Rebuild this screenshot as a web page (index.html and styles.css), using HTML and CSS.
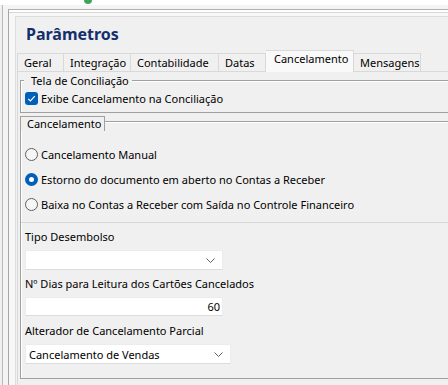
FILE: index.html
```html
<!DOCTYPE html>
<html lang="pt-BR">
  <head>
    <meta charset="UTF-8" />
    <meta name="viewport" content="width=device-width, initial-scale=1.0" />
    <title>Parâmetros</title>
    <link rel="stylesheet" href="styles.css">
  </head>
  <body>
    <div class="topbar"><span class="logo-dot"></span></div>
    <div class="frame">
      <div class="win">
        <div class="panel">
          <div class="header">
            <h1>Parâmetros</h1>
          </div>
          <ul class="tabs">
            <li>Geral</li>
            <li>Integração</li>
            <li>Contabilidade</li>
            <li>Datas</li>
            <li class="active">Cancelamento</li>
            <li>Mensagens</li>
          </ul>
          <div class="tabpage">
            <div class="group g-tela">
              <span class="legend">Tela de Conciliação</span>
              <label class="check">
                <span class="box">
                  <svg width="13" height="13" viewBox="0 0 13 13"><path d="M3.2 6.8 L5.4 9 L9.8 4.2" fill="none" stroke="#fff" stroke-width="1.2" /></svg>
                </span>
                Exibe Cancelamento na Conciliação
              </label>
            </div>

            <div class="group g-cancel">
              <span class="legend boxed">Cancelamento</span>
              <div class="radios">
                <label class="radio"><span class="dot"></span>Cancelamento Manual</label>
                <label class="radio"><span class="dot on"></span>Estorno do documento em aberto no Contas a Receber</label>
                <label class="radio"><span class="dot"></span>Baixa no Contas a Receber com Saída no Controle Financeiro</label>
              </div>
              <div class="fields">
                <div class="field">
                  <span class="lbl">Tipo Desembolso</span>
                  <div class="select"><span></span><svg class="chev" width="9" height="5" viewBox="0 0 9 5"><path d="M0.5 0.5 L4.5 4.5 L8.5 0.5" fill="none" stroke="#606060" stroke-width="1" /></svg></div>
                </div>
                <div class="field">
                  <span class="lbl">Nº Dias para Leitura dos Cartões Cancelados</span>
                  <div class="input">60</div>
                </div>
                <div class="field f-last">
                  <span class="lbl">Alterador de Cancelamento Parcial</span>
                  <div class="select wide"><span>Cancelamento de Vendas</span><svg class="chev" width="9" height="5" viewBox="0 0 9 5"><path d="M0.5 0.5 L4.5 4.5 L8.5 0.5" fill="none" stroke="#606060" stroke-width="1" /></svg></div>
                </div>
              </div>
            </div>
          </div>
        </div>
      </div>
    </div>
  </body>
</html>
```

FILE: styles.css
```css
* {
  margin: 0;
  padding: 0;
  box-sizing: border-box;
}
html,
body {
  height: 100%;
  overflow: hidden;
}
body {
  background-color: #f0f0f0;
  font-family: "Noto Sans", "Open Sans", sans-serif;
  font-size: 11px;
  line-height: 15px;
  color: #000;
}
li {
  list-style: none;
}

/* topo da janela */
.topbar {
  height: 5px;
  background-color: #fff;
}
.logo-dot {
  display: block;
  width: 8px;
  height: 4px;
  margin-left: 84px;
  border-radius: 0 0 4px 4px;
  background-color: #3ba55c;
}
.frame {
  height: 380px;
  margin-left: 2px;
  padding: 4px 0 0 5px;
  border-left: 1px solid #b8b8b8;
  background-color: #f4f4f4;
}
.win {
  height: 100%;
  padding: 6px 0 0 6px;
  border-left: 1px solid #a6a6a6;
  border-top: 1px solid #b0b0b0;
  box-shadow: inset 0 2px 0 #fff, inset 0 3px 0 #d6d6d6;
  background-color: #f7f7f7;
}
.panel {
  height: 100%;
  border-left: 1px solid #dcdcdc;
  border-top: 1px solid #dcdcdc;
  background-color: #f0f0f0;
}

/* titulo */
.header {
  height: 33px;
  padding: 7px 0 0 10px;
}
.header h1 {
  font-size: 16px;
  line-height: 20px;
  font-weight: bold;
  color: #142f6c;
}

/* abas - larguras fixas como no form original */
.tabs {
  display: grid;
  grid-template-columns: 47px 67px 88px 47px 88px 67px;
  align-items: end;
  margin-left: 1px;
  height: 21px;
  position: relative;
  z-index: 1;
}
.tabs li {
  height: 18px;
  padding: 1px 0 0 6px;
  border: 1px solid #d9d9d9;
  border-bottom: none;
  border-left: none;
  background-color: #f0f0f0;
  white-space: nowrap;
}
.tabs li:first-child {
  border-left: 1px solid #d9d9d9;
}
.tabs li.active {
  height: 22px;
  margin-bottom: -1px;
  padding: 0 0 0 8px;
  background-color: #f9f9f9;
}
.tabpage {
  height: 320px;
  margin-left: 1px;
  padding: 8px 0 0 2px;
  border-top: 1px solid #d9d9d9;
  border-left: 1px solid #d9d9d9;
}

/* caixas de grupo */
.group {
  position: relative;
  border: 1px solid #a0a0a0;
  border-right: none;
  box-shadow: inset 1px 1px 0 #fff;
}
.legend {
  position: absolute;
  top: -8px;
  left: 3px;
  padding: 0 3px 0 7px;
  background-color: #f0f0f0;
}
.legend.boxed {
  top: -6px;
  left: -1px;
  height: 15px;
  padding: 0 3px 0 6px;
  border: 1px solid #a0a0a0;
  border-bottom: none;
  line-height: 14px;
}
.g-tela {
  height: 33px;
  padding: 10px 0 0 4px;
}
.g-cancel {
  margin-top: 8px;
  height: 258px;
}

.check,
.radio {
  display: flex;
  align-items: center;
  column-gap: 3px;
}
.check .box {
  display: block;
  width: 13px;
  height: 13px;
  border-radius: 3px;
  background-color: #005fb8;
}
.check svg {
  display: block;
}

.radios {
  display: flex;
  flex-direction: column;
  row-gap: 10px;
  padding: 25px 0 10px 4px;
  border-bottom: 1px solid #d8d8d8;
}
.dot {
  display: block;
  width: 13px;
  height: 13px;
  border-radius: 50%;
  border: 1px solid #5f5f5f;
  background-color: #f6f6f6;
}
.dot.on {
  border: 4px solid #005fb8;
  background-color: #fff;
}

/* campos */
.fields {
  padding: 6px 0 0 4px;
}
.field {
  margin-bottom: 6px;
}
.field.f-last {
  margin-top: 7px;
}
.lbl {
  display: block;
  margin-bottom: 6px;
}
.select,
.input {
  width: 198px;
  height: 20px;
  border: 1px solid #ececec;
  border-bottom-color: #dcdcdc;
  background-color: #fff;
}
.select {
  display: flex;
  align-items: center;
  justify-content: space-between;
  padding: 0 7px 0 3px;
}
.select.wide {
  width: 206px;
}
.input {
  height: 19px;
  padding: 1px 2px 0 0;
  text-align: right;
}
```
